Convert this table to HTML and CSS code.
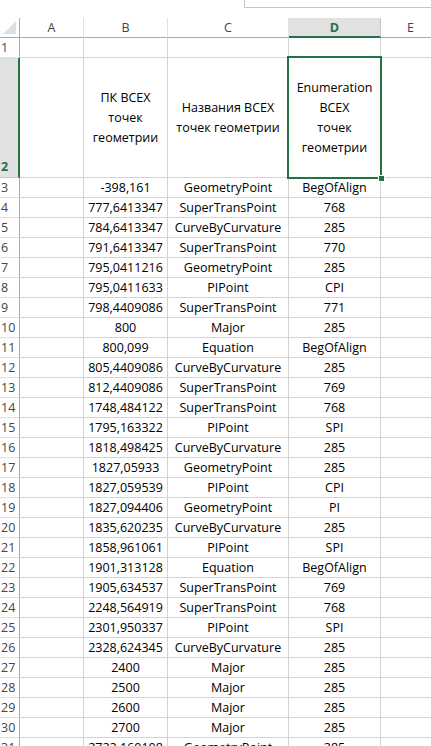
FILE: index.html
```html
<!DOCTYPE html>
<html>
<head>
<meta charset="utf-8">
<link rel="stylesheet" href="styles.css">
</head>
<body>
<div class="topbar"><div class="formula"></div></div>
<div class="sheet" id="sheet">
  <div class="corner"><span class="tri"></span></div>
  <div class="ch">A</div>
  <div class="ch">B</div>
  <div class="ch">C</div>
  <div class="ch sel">D</div>
  <div class="ch">E</div>

  <div class="rh">1</div><div class="c"></div><div class="c"></div><div class="c"></div><div class="c"></div><div class="c"></div>

  <div class="rh rsel">2</div>
  <div class="c"></div>
  <div class="c mid">ПК ВСЕХ<br>точек<br>геометрии</div>
  <div class="c mid">Названия ВСЕХ<br>точек геометрии</div>
  <div class="c mid active">Enumeration<br>ВСЕХ<br>точек<br>геометрии<span class="selbox"></span><span class="handle"></span></div>
  <div class="c"></div>
</div>
<script src="script.js"></script>
</body>
</html>
```
FILE: script.js
```js
var rows = [
["-398,161","GeometryPoint","BegOfAlign"],
["777,6413347","SuperTransPoint","768"],
["784,6413347","CurveByCurvature","285"],
["791,6413347","SuperTransPoint","770"],
["795,0411216","GeometryPoint","285"],
["795,0411633","PIPoint","CPI"],
["798,4409086","SuperTransPoint","771"],
["800","Major","285"],
["800,099","Equation","BegOfAlign"],
["805,4409086","CurveByCurvature","285"],
["812,4409086","SuperTransPoint","769"],
["1748,484122","SuperTransPoint","768"],
["1795,163322","PIPoint","SPI"],
["1818,498425","CurveByCurvature","285"],
["1827,05933","GeometryPoint","285"],
["1827,059539","PIPoint","CPI"],
["1827,094406","GeometryPoint","PI"],
["1835,620235","CurveByCurvature","285"],
["1858,961061","PIPoint","SPI"],
["1901,313128","Equation","BegOfAlign"],
["1905,634537","SuperTransPoint","769"],
["2248,564919","SuperTransPoint","768"],
["2301,950337","PIPoint","SPI"],
["2328,624345","CurveByCurvature","285"],
["2400","Major","285"],
["2500","Major","285"],
["2600","Major","285"],
["2700","Major","285"],
["2722,160108","GeometryPoint","285"]
];
var sheet = document.getElementById("sheet");
rows.forEach(function (r, i) {
  var html = '<div class="rh">' + (i + 3) + '</div><div class="c"></div>';
  html += '<div class="c">' + r[0] + '</div>';
  html += '<div class="c">' + r[1] + '</div>';
  html += '<div class="c">' + r[2] + '</div>';
  html += '<div class="c"></div>';
  sheet.insertAdjacentHTML("beforeend", html);
});
```
FILE: styles.css
```css
html, body {
  margin: 0;
  padding: 0;
  background: #fff;
  overflow: hidden;
}
body {
  font-family: "Open Sans", "Liberation Sans", sans-serif;
  font-size: 12.5px;
  color: #000;
  width: 431px;
  height: 746px;
}
.topbar {
  height: 18px;
}
.formula {
  margin-left: 244px;
  height: 8px;
  border-left: 1px solid #c6c6c6;
  border-bottom: 1px solid #c6c6c6;
  box-sizing: border-box;
}
.sheet {
  display: grid;
  grid-template-columns: 20px 64px 84px 121px 92px 60px;
  grid-template-rows: 20px 20px 120px;
  grid-auto-rows: 20px;
}
.sheet > div {
  box-sizing: border-box;
  border-right: 1px solid #d4d4d4;
  border-bottom: 1px solid #d4d4d4;
  display: flex;
  align-items: center;
  justify-content: center;
  white-space: nowrap;
  line-height: 20px;
  padding-top: 1px;
}
.corner {
  position: relative;
  border-bottom-color: #ababab !important;
  border-right-color: #ababab !important;
}
.tri {
  position: absolute;
  right: 3px;
  bottom: 3px;
  width: 0;
  height: 0;
  border-left: 13px solid transparent;
  border-bottom: 13px solid #dfdfdf;
}
.ch {
  color: #444;
  border-bottom-color: #ababab !important;
  border-right-color: #e1e1e1 !important;
}
.ch.sel {
  background: #e1e1e1;
  color: #217346;
  font-weight: bold;
  border-bottom: 2px solid #217346 !important;
  border-right-color: #c6c6c6 !important;
}
.rh {
  color: #444;
  justify-content: flex-start !important;
  padding-left: 1px;
  border-right-color: #ababab !important;
  border-bottom-color: #e1e1e1 !important;
  font-size: 12.5px;
}
.rh.rsel {
  background: #e1e1e1;
  color: #217346;
  font-weight: bold;
  align-items: flex-end !important;
  border-right: 2px solid #217346 !important;
  border-bottom-color: #c6c6c6 !important;
}
.mid {
  flex-direction: column;
  text-align: center;
  line-height: 20px;
  padding-top: 2px;
}
.active {
  position: relative;
}
.selbox {
  position: absolute;
  left: -2px;
  top: -2px;
  right: -2px;
  bottom: -2px;
  border: 2px solid #217346;
  pointer-events: none;
}
.handle {
  position: absolute;
  right: -5px;
  bottom: -5px;
  width: 5px;
  height: 5px;
  background: #217346;
  border: 1px solid #fff;
}
```
